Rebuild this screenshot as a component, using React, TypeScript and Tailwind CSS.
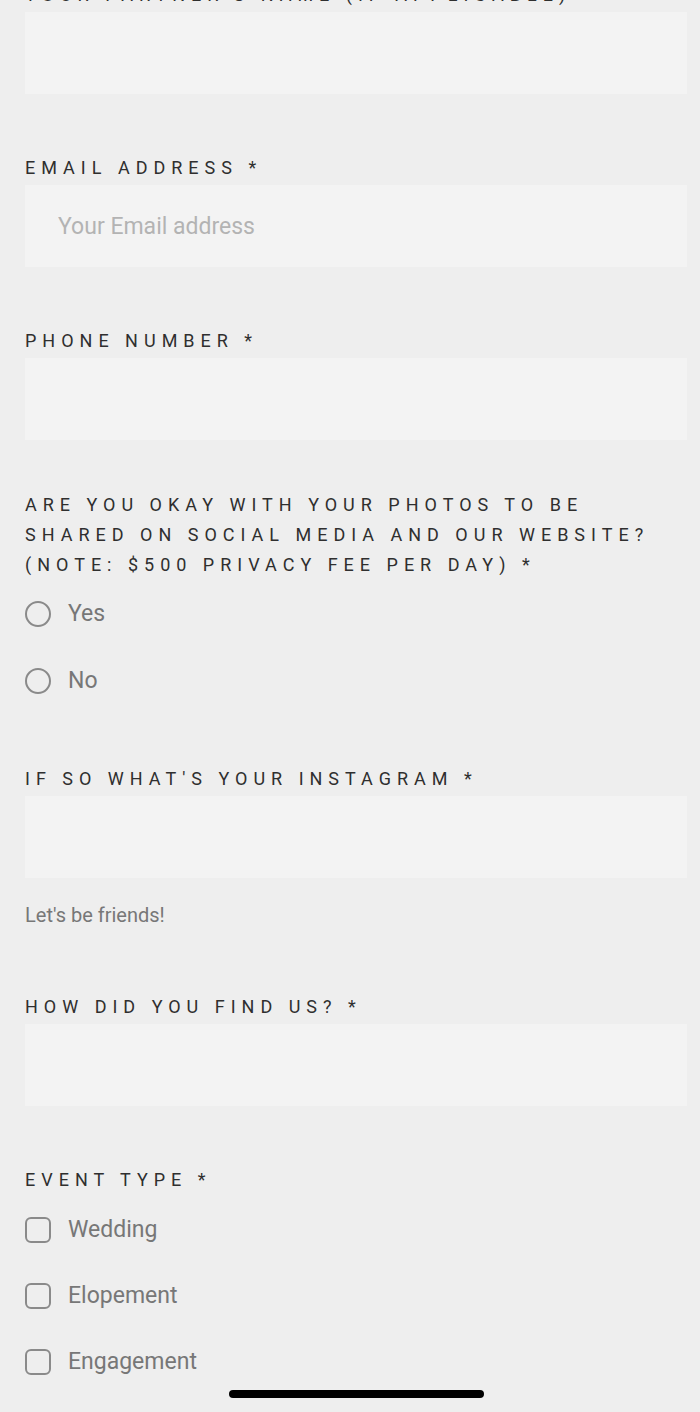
const labelCls =
  "block text-[18px] leading-[30px] tracking-[6px] uppercase text-[#2f2f2f]";

function Field({
  label,
  placeholder,
  className = "",
}: {
  label: string;
  placeholder?: string;
  className?: string;
}) {
  return (
    <div className={className}>
      <label className={labelCls}>{label}</label>
      <input
        type="text"
        placeholder={placeholder}
        className="mt-[2px] block h-[82px] w-full bg-[#f3f3f3] px-[33px] text-[23px] text-[#555] outline-none placeholder:text-[#b3b3b3]"
      />
    </div>
  );
}

function Radio({ label }: { label: string }) {
  return (
    <label className="flex h-[40px] items-center gap-[17px]">
      <span className="h-[26px] w-[26px] rounded-full border-[2.5px] border-[#8a8a8a]" />
      <span className="text-[23px] text-[#777]">{label}</span>
    </label>
  );
}

function Checkbox({ label }: { label: string }) {
  return (
    <label className="flex h-[40px] items-center gap-[17px]">
      <span className="h-[26px] w-[26px] rounded-[6px] border-[2.5px] border-[#8a8a8a]" />
      <span className="text-[23px] text-[#777]">{label}</span>
    </label>
  );
}

export default function App() {
  return (
    <div
      className="relative h-[1412px] overflow-hidden bg-[#eeeeee] px-[25px] pr-[13px]"
      style={{ fontFamily: "Roboto, 'Noto Sans', sans-serif" }}
    >
      <div className="-mt-[20px]">
        <Field label="Your partner's name (if applicable)" />
        <Field className="mt-[59px]" label="Email address *" placeholder="Your Email address" />
        <Field className="mt-[59px]" label="Phone number *" />

        <div className="mt-[50px]">
          <p className={labelCls}>
            Are you okay with your photos to be shared on social media and our website? (Note: $500 privacy fee per day) *
          </p>
          <div className="mt-[14px] flex flex-col gap-[27px]">
            <Radio label="Yes" />
            <Radio label="No" />
          </div>
        </div>

        <Field className="mt-[63px]" label="If so what's your instagram *" />
        <p className="mt-[25px] text-[20px] leading-[24px] text-[#777]">Let's be friends!</p>

        <Field className="mt-[65px]" label="How did you find us? *" />

        <div className="mt-[59px]">
          <span className={labelCls}>Event type *</span>
          <div className="mt-[15px] flex flex-col gap-[26px]">
            <Checkbox label="Wedding" />
            <Checkbox label="Elopement" />
            <Checkbox label="Engagement" />
          </div>
        </div>
      </div>

      {/* home indicator */}
      <div className="absolute left-[229px] top-[1390px] h-[8px] w-[255px] rounded-full bg-black" />
    </div>
  );
}
